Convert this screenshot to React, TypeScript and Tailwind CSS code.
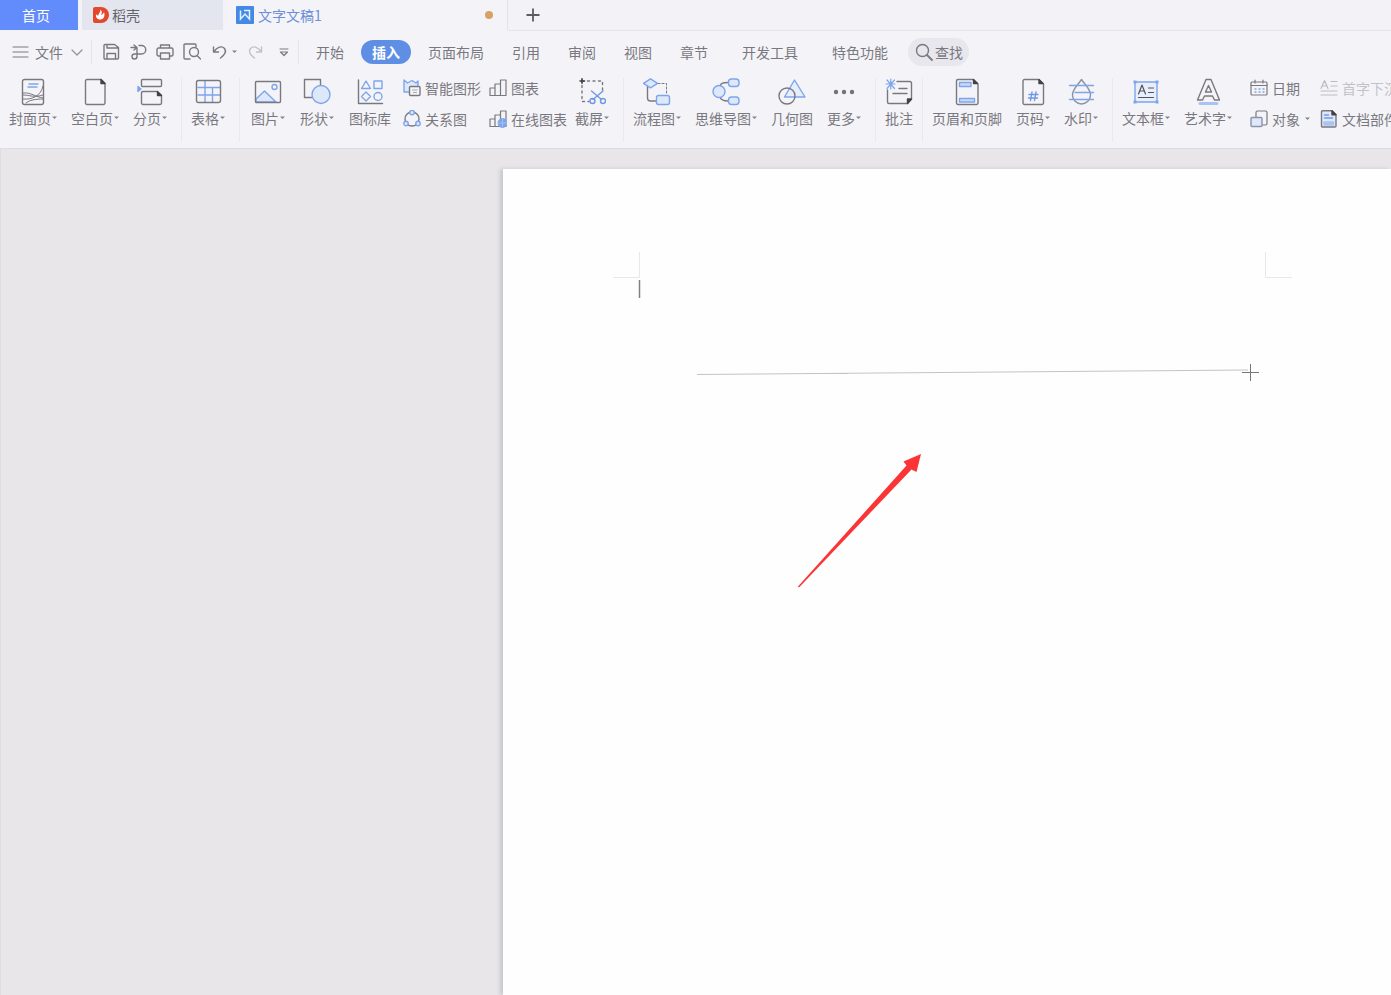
import React from 'react'

interface IconProps {
  children: React.ReactNode
  size?: number
}

// Shared frame for all line icons: large ribbon icons use 28, inline ones 18
const Icon: React.FC<IconProps> = ({ children, size = 28 }) => (
  <svg
    width={size}
    height={size}
    viewBox={`0 0 ${size} ${size}`}
    fill="none"
    stroke="#7a787f"
    strokeWidth="1.4"
    strokeLinecap="round"
    strokeLinejoin="round"
    className="shrink-0"
    aria-hidden="true"
  >
    {children}
  </svg>
)

const Caret: React.FC = () => (
  <svg width="6" height="4" viewBox="0 0 6 4" className="shrink-0" aria-hidden="true">
    <path d="M1 .5h5L3.500 3z" fill="#85838a" />
  </svg>
)

interface ToolProps {
  label: string
  caret?: boolean
  children: React.ReactNode
}

const Tool: React.FC<ToolProps> = ({ label, caret, children }) => (
  <button className="flex shrink-0 flex-col items-center gap-0.5 px-[7px]">
    {children}
    <span className="flex items-center leading-5">
      {label}
      {caret && <Caret />}
    </span>
  </button>
)

interface SmallToolProps extends ToolProps {
  disabled?: boolean
}

const SmallTool: React.FC<SmallToolProps> = ({ label, caret, disabled, children }) => (
  <button
    disabled={disabled}
    className="flex h-5 shrink-0 items-center gap-1 leading-5 disabled:text-[#c4c2c8]"
  >
    {children}
    <span>{label}</span>
    {caret && <Caret />}
  </button>
)

const Group: React.FC<{ children: React.ReactNode }> = ({ children }) => (
  <div className="flex shrink-0 items-start border-r border-[#eae9ee] pr-[7px] pl-0.5">
    {children}
  </div>
)

const TabBar: React.FC = () => (
  <div className="flex h-[31px] shrink-0 bg-[#f2f2f7]">
    <button className="h-[30px] w-[78px] bg-[#628cfb] pr-1.5 text-white">首页</button>
    <div className="w-1" />
    <button className="flex h-[30px] w-[141px] items-center gap-[3px] bg-[#e3e5ef] pl-[11px] text-[#65646b]">
      <svg width="16" height="18" viewBox="0 0 16 18" aria-hidden="true">
        <path d="M2 1h6a8 8 0 0 1 0 16H2a2 2 0 0 1-2-2V3a2 2 0 0 1 2-2z" fill="#e4472b" />
        <path
          d="M7.500 3.500c2 2 1.500 3.500.5 5.500 1.500-.5 2.500-1.500 3-3 1.500 4-.5 7.500-3.500 7.500S2.500 11.500 3 8.500c1 .3 1.500.8 2 1.500C5.500 7.500 7.500 6.500 7.500 3.500z"
          fill="#fff"
        />
      </svg>
      稻壳
    </button>
    <button className="ml-[3px] flex h-[30px] w-[282px] items-center gap-1 border-r border-[#e2e2ea] bg-[#f4f4f8] pl-2.5 text-[#6d8fd8]">
      <svg width="18" height="18" viewBox="0 0 18 18" aria-hidden="true">
        <rect width="18" height="18" rx="1" fill="#4489e6" />
        <path d="M4.500 4.500V13L9 8l4.500 5V4.500H8" fill="none" stroke="#e4f1ff" strokeWidth="1.500" />
      </svg>
      文字文稿1
      <span className="mr-3.5 ml-auto size-2 rounded-full bg-[#d9a263]" />
    </button>
    <div className="flex flex-1 items-center border-b border-[#e4e4eb] pl-[18px]">
      <button aria-label="新建">
        <svg width="14" height="14" viewBox="0 0 14 14" stroke="#5e5c62" strokeWidth="1.800" aria-hidden="true">
          <path d="M7 .5v13M.5 7h13" />
        </svg>
      </button>
    </div>
  </div>
)

const MenuBar: React.FC = () => (
  <div className="flex h-[41px] shrink-0 items-center">
    <button className="ml-3 flex items-center gap-[5px]">
      <Icon size={18}>
        <path d="M1 4h15M1 9h15M1 14h15" strokeWidth="1.200" />
      </Icon>
      文件
      <Icon size={18}>
        <path d="M4 7l5 5 5-5" strokeWidth="1.200" stroke="#929097" />
      </Icon>
    </button>
    <div className="mx-[5px] h-6 w-px bg-[#e6e5ea]" />
    <div className="flex items-center gap-[9px] pl-[5px]">
      <button aria-label="保存">
        <Icon size={18}>
          <path d="M3 1.500h9.500l4 3V15a1 1 0 0 1-1 1H3a1 1 0 0 1-1-1V2.500a1 1 0 0 1 1-1zM5 5h11M5 1.500V5M5 16v-5.500h8.500V16" />
        </Icon>
      </button>
      <button aria-label="输出为PDF">
        <Icon size={18}>
          <path d="M2 4.500h5.500M5 2l3 2.500L5 7M10 2.500h2.500a4 4 0 0 1 0 8.500H5.500a2.500 2.500 0 1 0 2.500 2.500V5.500" />
        </Icon>
      </button>
      <button aria-label="打印">
        <Icon size={18}>
          <path d="M4.500 5V2h9v3M4.500 13H2.500a1.500 1.500 0 0 1-1.500-1.500v-5A1.500 1.500 0 0 1 2.500 5h13A1.500 1.500 0 0 1 17 6.500v5a1.500 1.500 0 0 1-1.500 1.500H13.500M4.500 10h9v6h-9z" />
        </Icon>
      </button>
      <button aria-label="打印预览">
        <Icon size={18}>
          <path d="M7 16H2a1 1 0 0 1-1-1V2a1 1 0 0 1 1-1h10a1 1 0 0 1 1 1v2M14.500 13l3 3" />
          <circle cx="11" cy="9" r="4.500" />
        </Icon>
      </button>
      <button aria-label="撤销" className="ml-px flex items-center gap-0.5">
        <Icon size={18}>
          <path d="M2.500 4v5h5M3 8.500C6 4 11 2.500 13.500 5.500c2.500 3.500-.5 7-4 9.500" />
        </Icon>
        <Caret />
      </button>
      <button aria-label="恢复">
        <Icon size={18}>
          <path d="M15.500 4v5h-5M15 8.500C12 4 7 2.500 4.500 5.500 2 9 5 12.500 8.500 15" stroke="#c3c1c7" />
        </Icon>
      </button>
      <button aria-label="自定义快速访问工具栏" className="ml-0.5">
        <Icon size={18}>
          <path d="M5 6h8M5.500 9h7L9 12.500z" strokeWidth="1.200" />
        </Icon>
      </button>
    </div>
    <div className="ml-[5px] h-6 w-px bg-[#e6e5ea]" />
    <nav className="flex items-center">
      <button className="px-[17px]">开始</button>
      <button className="h-6 rounded-full bg-[#5f8fe4] px-[11px] font-bold text-white">插入</button>
      <button className="ml-[3px] px-3.5">页面布局</button>
      <button className="px-3.5">引用</button>
      <button className="px-3.5">审阅</button>
      <button className="px-3.5">视图</button>
      <button className="px-3.5">章节</button>
      <button className="ml-1.5 px-3.5">开发工具</button>
      <button className="ml-1.5 px-3.5">特色功能</button>
    </nav>
    <button className="ml-1.5 flex h-7 w-[61px] items-center gap-0.5 rounded-full bg-[#e8e7ed] pl-[7px]">
      <Icon size={18}>
        <circle cx="7.500" cy="7.500" r="6" />
        <path d="M12 12l5 5" strokeWidth="1.800" />
      </Icon>
      查找
    </button>
  </div>
)

const Ribbon: React.FC = () => (
  <div className="flex h-[76px] shrink-0 overflow-hidden pt-1.5 pb-1.5">
    <Group>
      <Tool label="封面页" caret>
        <Icon>
          <rect x="3.500" y="1.500" width="21" height="25" rx="2" />
          <path d="M10 6h9M9 9h9" stroke="#7ea5ea" />
          <path d="M4 15c8-1 12 4 20 5M4 21c9 1 18-3 20-13M4 17c7 0 11 3 20 0M7 25c3-3 10-4 17-4" strokeWidth="1" />
        </Icon>
      </Tool>
      <Tool label="空白页" caret>
        <Icon>
          <path d="M6 1.500h14l4 4V25a1.500 1.500 0 0 1-1.500 1.500h-16.500A1.500 1.500 0 0 1 4.500 25V3A1.500 1.500 0 0 1 6 1.500z" />
          <path d="M20 1.500v4h4z" fill="#444248" stroke="#444248" />
        </Icon>
      </Tool>
      <Tool label="分页" caret>
        <Icon>
          <rect x="5.500" y="1.500" width="20" height="7" rx="1" />
          <path d="M7 13.500h14l4.500 4V25a1.500 1.500 0 0 1-1.500 1.500H7A1.500 1.500 0 0 1 5.500 25V15A1.500 1.500 0 0 1 7 13.500z" />
          <path d="M21.500 13.500v4h4z" fill="#444248" stroke="#444248" />
          <path d="M2 8.500v5l3-2.500z" fill="#7ea5ea" stroke="#7ea5ea" />
        </Icon>
      </Tool>
    </Group>
    <Group>
      <Tool label="表格" caret>
        <Icon>
          <path d="M4 9.500h22M4 17h22M11 3v21M18.500 10v14" stroke="#7ea5ea" />
          <rect x="2.500" y="2.500" width="24" height="22" rx="2" />
        </Icon>
      </Tool>
    </Group>
    <div className="flex shrink-0 items-start gap-px border-r border-[#eae9ee] pr-[7px] pl-1">
      <Tool label="图片" caret>
        <Icon>
          <path d="M2 21l8.500-8L22 24H2z" fill="#dde8fb" stroke="#7ea5ea" />
          <circle cx="20.500" cy="9" r="2.500" stroke="#7ea5ea" />
          <rect x="1.500" y="3.500" width="25" height="21" rx="1" />
        </Icon>
      </Tool>
      <Tool label="形状" caret>
        <Icon>
          <rect x="1.500" y="1.500" width="16" height="18" />
          <circle cx="18" cy="16.500" r="9" fill="#dde8fb" stroke="#7ea5ea" />
        </Icon>
      </Tool>
      <Tool label="图标库">
        <Icon>
          <path d="M2.500 2v23.500h24" />
          <path d="M10 3l4.500 7.500h-9zM18 3h8v7.500h-8zM10 14l4.500 4.500L10 23l-4.500-4.500z" stroke="#7ea5ea" />
          <circle cx="22" cy="18.500" r="4" stroke="#7ea5ea" />
        </Icon>
      </Tool>
      <div className="flex gap-2 pl-1">
        <div className="flex flex-col gap-[11px]">
          <SmallTool label="智能图形">
            <Icon size={18}>
              <path d="M6 13H1V1l3.500 3L9 1.500l4 2.500 2-2v5" fill="#dde8fb" stroke="#7ea5ea" />
              <rect x="6.500" y="7.500" width="10.500" height="9" rx="1" fill="#f4f4f8" />
              <path d="M9.500 11h4.500M10.500 13.500h3" strokeWidth="1" stroke="#a9a7ad" />
            </Icon>
          </SmallTool>
          <SmallTool label="关系图">
            <Icon size={18}>
              <circle cx="9" cy="9" r="7" />
              <circle cx="9" cy="2.500" r="2.200" fill="#dde8fb" stroke="#7ea5ea" />
              <circle cx="3" cy="13.500" r="2.200" fill="#dde8fb" stroke="#7ea5ea" />
              <circle cx="15" cy="13.500" r="2.200" fill="#dde8fb" stroke="#7ea5ea" />
            </Icon>
          </SmallTool>
        </div>
        <div className="flex flex-col gap-[11px]">
          <SmallTool label="图表">
            <Icon size={18}>
              <path d="M1 9h5v7.500H1zM6 5h5.500v11.500H6zM11.500 1H17v15.500h-5.500z" strokeWidth="1.200" />
            </Icon>
          </SmallTool>
          <SmallTool label="在线图表">
            <Icon size={18}>
              <path d="M1 9h5v7.500H1zM6 5h5.500v11.500H6zM11.500 1H17v15.500h-5.500z" strokeWidth="1.200" />
              <circle cx="13.500" cy="13" r="4.500" fill="#7ea5ea" stroke="#7ea5ea" strokeWidth="1" />
              <path d="M9.500 13h8M13.500 9v8" stroke="#a3c0f3" strokeWidth="1" />
            </Icon>
          </SmallTool>
        </div>
      </div>
      <Tool label="截屏" caret>
        <Icon>
          <path d="M4 2v21.500h7M4 3h20.500v9" strokeDasharray="2 3.500" />
          <path d="M2 3h4.500M4 .8v4.500" stroke="#444248" strokeWidth="1.600" />
          <path d="M13.500 13l10 8.500M25 13l-10 8.500" stroke="#6f98e2" />
          <circle cx="14.500" cy="23" r="2.500" stroke="#6f98e2" />
          <circle cx="25" cy="23" r="2.500" stroke="#6f98e2" />
        </Icon>
      </Tool>
    </div>
    <Group>
      <Tool label="流程图" caret>
        <Icon>
          <path d="M4.500 7v13a3 3 0 0 0 3 3H14" />
          <path d="M15 5.500h8.500V16" strokeDasharray="2 2" strokeWidth="1" />
          <path d="M7.500 .8l7 4.500-7 4.500-7-4.500z" fill="#dde8fb" stroke="#7ea5ea" />
          <rect x="13.500" y="17.500" width="13" height="9" rx="2" fill="#dde8fb" stroke="#7ea5ea" />
        </Icon>
      </Tool>
      <Tool label="思维导图" caret>
        <Icon>
          <path d="M8 8c1-3 3-3.500 8-3.500M8 19c1 3 3 4 8 4" />
          <circle cx="7" cy="13.500" r="6" fill="#dde8fb" stroke="#7ea5ea" />
          <rect x="16.500" y="1" width="10.500" height="7.500" rx="3" fill="#dde8fb" stroke="#7ea5ea" />
          <rect x="16.500" y="19" width="10.500" height="7.500" rx="3" fill="#dde8fb" stroke="#7ea5ea" />
        </Icon>
      </Tool>
      <Tool label="几何图">
        <Icon>
          <path d="M16.500 2l10.500 17H6.500z" fill="#e6eefb" stroke="#7ea5ea" />
          <circle cx="9" cy="18" r="8" />
        </Icon>
      </Tool>
      <Tool label="更多" caret>
        <Icon>
          <g fill="#737178" stroke="none">
            <circle cx="6" cy="14" r="2.200" />
            <circle cx="14" cy="14" r="2.200" />
            <circle cx="22" cy="14" r="2.200" />
          </g>
        </Icon>
      </Tool>
    </Group>
    <div className="shrink-0 border-r border-[#eae9ee] px-0.5">
      <Tool label="批注">
        <Icon>
          <path d="M12 3.500h13a1.500 1.500 0 0 1 1.500 1.500v16l-4 4.500H4A1.500 1.500 0 0 1 2.500 24V12M14 10.500h8M8 15.500h14" />
          <path d="M26.500 21h-4v4.500z" fill="#444248" stroke="#444248" />
          <path d="M1 6h9M2 2l7.500 8.500M9.500 2L2 10.500M5.800 1v10" stroke="#7ea5ea" strokeWidth="1.200" />
        </Icon>
      </Tool>
    </div>
    <Group>
      <Tool label="页眉和页脚">
        <Icon>
          <path d="M5 1.500h15l5 4.500v19a1.500 1.500 0 0 1-1.500 1.500H5A1.500 1.500 0 0 1 3.500 25V3A1.500 1.500 0 0 1 5 1.500z" />
          <path d="M20.500 1.500v4h4z" fill="#444248" stroke="#444248" />
          <path d="M6.500 4.500H18v4H6.500zM6.500 20.500h15v3.500h-15z" fill="#c9dbf8" stroke="#7ea5ea" />
        </Icon>
      </Tool>
      <Tool label="页码" caret>
        <Icon>
          <path d="M5.500 1.500h14l5 4.500v19a1.500 1.500 0 0 1-1.500 1.500H5.500A1.500 1.500 0 0 1 4 25V3a1.500 1.500 0 0 1 1.500-1.500z" />
          <path d="M20 1.500v4h4z" fill="#444248" stroke="#444248" />
          <path d="M10 16.500h9M9.500 20h9M13 14l-1.500 8.500M17 14l-1.500 8.500" stroke="#6f98e2" />
        </Icon>
      </Tool>
      <Tool label="水印" caret>
        <Icon>
          <path d="M14.500 1.500c3.500 5.500 9 9.500 9 15.500a9 9 0 0 1-18 0c0-6 5.500-10 9-15.500z" stroke="#8b93a5" />
          <path d="M2.500 7.500h24M8 14.500h18.500M2.500 21.500h24" stroke="#7ea5ea" />
        </Icon>
      </Tool>
    </Group>
    <div className="flex shrink-0 items-start pl-0.5">
      <Tool label="文本框" caret>
        <Icon>
          <rect x="3" y="4" width="22" height="20" fill="#e8effb" stroke="#7ea5ea" />
          <path d="M1.500 2.500h3v3h-3zM23.500 2.500h3v3h-3zM1.500 22.500h3v3h-3zM23.500 22.500h3v3h-3z" fill="#7ea5ea" stroke="none" />
          <path d="M6.500 16l3.500-9 3.500 9M8 13h4M16.500 10h5M16.500 14.500h5M6.500 19.500h15" stroke="#55535a" strokeWidth="1.200" />
        </Icon>
      </Tool>
      <Tool label="艺术字" caret>
        <Icon>
          <path d="M6 25.500h17" stroke="#a9c4f3" strokeWidth="3" />
          <path d="M12 1.500h5l8.500 20.500h-5l-2-4h-8l-2 4h-5zM14.500 7.500l-3 6.500h6z" />
        </Icon>
      </Tool>
      <div className="flex gap-2.5 pl-[11px]">
        <div className="flex flex-col gap-[11px]">
          <SmallTool label="日期">
            <Icon size={18}>
              <rect x="1" y="3" width="16" height="13" rx="1" strokeWidth="1.200" />
              <path d="M1 6.500h16M5 1v3M13 1v3" strokeWidth="1.200" />
              <path d="M5 10h1M9 10h1M13 10h1M5 13h1M9 13h1M13 13h1" stroke="#7ea5ea" />
            </Icon>
          </SmallTool>
          <SmallTool label="对象" caret>
            <Icon size={18}>
              <path d="M6 7V2.500A1.500 1.500 0 0 1 7.500 1h8A1.500 1.500 0 0 1 17 2.500v11a1.500 1.500 0 0 1-1.500 1.500H12" strokeWidth="1.200" />
              <rect x="1" y="7.500" width="11" height="9" rx="1" fill="#dde8fb" stroke="#8b93a5" />
            </Icon>
          </SmallTool>
        </div>
        <div className="flex flex-col gap-[11px]">
          <SmallTool label="首字下沉" disabled>
            <Icon size={18}>
              <path d="M1 9.500L4.500 1.500 8 9.500M2.500 7h4M11 2.500h6M11 7h6M1 12h16M1 16h16" stroke="#bdbbc1" strokeWidth="1.200" />
            </Icon>
          </SmallTool>
          <SmallTool label="文档部件" caret>
            <Icon size={18}>
              <path d="M2.500 .8H12l4 4V16a1 1 0 0 1-1 1H2.500a1 1 0 0 1-1-1V1.800a1 1 0 0 1 1-1z" fill="#dde8fb" />
              <path d="M12 .8v4h4z" fill="#444248" stroke="#444248" />
              <path d="M4.500 5h4M4.500 8h8" stroke="#6f98e2" />
              <path d="M4 12h9.500v3H4z" fill="#a9c4f3" stroke="#a9c4f3" />
            </Icon>
          </SmallTool>
        </div>
      </div>
    </div>
  </div>
)

const Workspace: React.FC = () => (
  <main className="flex flex-1 overflow-hidden border-t border-l border-[#dddce0] bg-[#e8e6e9] pt-5 pl-[502px]">
    <div className="flex-1 bg-[#fefefe] shadow-[-3px_0_4px_#c6c6c8]">
      <svg width="100%" height="600" fill="none" className="block overflow-visible" aria-hidden="true">
        {/* margin corners */}
        <path d="M110 108.500h26.500V83M762.500 83v25.500H789" stroke="#e8e8e8" />
        {/* text cursor */}
        <path d="M136.500 111v18" stroke="#808080" strokeWidth="1.500" />
        {/* line being drawn, with the crosshair at its end */}
        <path d="M194 205.500L745 201" stroke="#c4c4c4" />
        <path d="M303 204.500h42" stroke="#c4c4c4" />
        <path d="M739 203.500h17M747.500 195v17" stroke="#77777a" />
        <path d="M418 285l-4.500 18-5-2.500L296 418.500l-1-1L403.500 296.500l-3-4z" fill="#fb3535" />
      </svg>
    </div>
  </main>
)

const App: React.FC = () => (
  <div className="flex min-h-screen flex-col overflow-hidden bg-[#f4f4f8] font-['Noto_Sans_CJK_SC',sans-serif] text-sm whitespace-nowrap text-[#7a787f]">
    <TabBar />
    <MenuBar />
    <Ribbon />
    <Workspace />
  </div>
)

export default App
